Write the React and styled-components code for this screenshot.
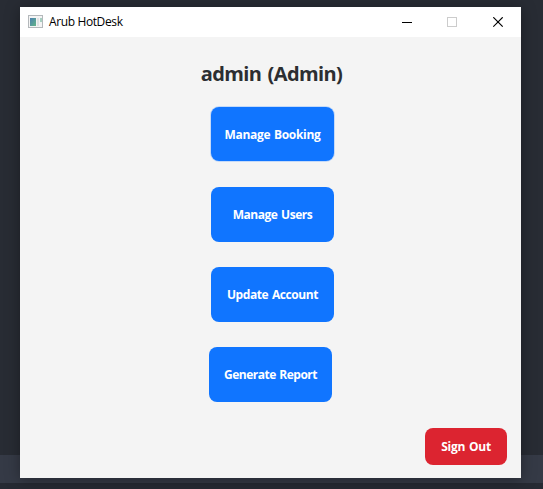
import React from 'react';
import styled, { createGlobalStyle } from 'styled-components';

const GlobalStyle = createGlobalStyle`
  * { box-sizing: border-box; }
  body { margin: 0; overflow: hidden; background: #282c34; font-family: "Open Sans", "Noto Sans", sans-serif; }
`;
const Desktop = styled.div`
  height: 489px;
  padding: 7px 22px 0 20px;
  background: linear-gradient(#282c34 0 455px, #353a46 455px 483px, #262a33 483px);
`;
const Window = styled.main`
  height: 471px;
  background: #f4f4f4;
  box-shadow: 0 2px 14px rgba(0, 0, 0, 0.35);
`;
const TitleBar = styled.header`
  display: flex;
  align-items: center;
  height: 30px;
  padding-left: 8px;
  background: #fff;
`;
const AppIcon = styled.svg`
  display: block;
  margin-top: -2px;
`;
const Title = styled.span`
  flex: 1;
  padding-left: 6px;
  font-size: 12px;
  line-height: 16px;
  letter-spacing: -0.38px;
  color: #000;
`;
const WindowControl = styled.span`
  width: 45.5px;
  height: 30px;
  display: grid;
  place-items: center;
`;
const Content = styled.section`
  display: flex;
  flex-direction: column;
  align-items: center;
  height: 441px;
  padding: 23px 14px 13px 14px;
`;
const Heading = styled.h1`
  margin: 0 0 19px;
  padding-left: 2px;
  font-size: 20px;
  line-height: 28px;
  font-weight: 700;
  letter-spacing: -0.6px;
  word-spacing: 1.5px;
  color: #2c2e31;
`;
const Menu = styled.nav`
  display: flex;
  flex-direction: column;
  align-items: flex-end;
  gap: 25px;
  padding-left: 2px;
`;
const Button = styled.button`
  width: ${(p) => p.$width}px;
  height: ${(p) => p.$height}px;
  padding: 0;
  border: 0;
  border-radius: 8px;
  background: ${(p) => p.$color};
  color: #fff;
  font: 700 12px/16px "Open Sans", "Noto Sans", sans-serif;
  letter-spacing: ${(p) => p.$tracking}px;
  word-spacing: 1px;
  margin-right: ${(p) => p.$shift || 0}px;
`;
const FocusedButton = styled(Button)`
  padding-top: 1px;
  margin-bottom: 1px;
  box-shadow: 0 0 0 1px #c5daf8;
`;
const SignOut = styled(Button)`
  align-self: flex-end;
  margin-top: auto;
`;

const blue = '#1075ff';

export default function App() {
  return (
    <>
      <GlobalStyle />
      <Desktop>
        <Window>
          <TitleBar>
            <AppIcon width="15" height="13">
              <defs>
                <linearGradient id="pane" x1="0" y1="0" x2="1" y2="1">
                  <stop offset="0" stopColor="#4c7fb0" />
                  <stop offset="1" stopColor="#62b588" />
                </linearGradient>
              </defs>
              <rect x=".5" y=".5" width="14" height="12" fill="#f4f4f4" stroke="#b4b8bb" />
              <rect x="2" y="3" width="6" height="8" fill="url(#pane)" />
              <rect x="9" y="3" width="2" height="8" fill="#dfe2e3" />
              <rect x="12" y="3" width="2" height="4" fill="#a5cfc0" />
            </AppIcon>
            <Title>Arub HotDesk</Title>
            <WindowControl><svg width="11" height="11"><path d="M0 5.5H10" stroke="#000" /></svg></WindowControl>
            <WindowControl><svg width="11" height="11"><rect x=".5" y=".5" width="9" height="9" fill="none" stroke="#ccc" /></svg></WindowControl>
            <WindowControl><svg width="11" height="11"><path d="M.3 .3L9.7 9.7M9.7 .3L.3 9.7" stroke="#000" strokeWidth="1.2" /></svg></WindowControl>
          </TitleBar>
          <Content>
            <Heading>admin (Admin)</Heading>
            <Menu>
              <FocusedButton $width={123} $height={54} $color={blue} $tracking={-0.32}>Manage Booking</FocusedButton>
              <Button $width={123} $height={55} $color={blue} $tracking={-0.47}>Manage Users</Button>
              <Button $width={123} $height={55} $color={blue} $tracking={-0.42}>Update Account</Button>
              <Button $width={123} $height={55} $color={blue} $tracking={-0.5} $shift={2}>Generate Report</Button>
            </Menu>
            <SignOut $width={82} $height={37} $color="#dc2430" $tracking={-0.25}>Sign Out</SignOut>
          </Content>
        </Window>
      </Desktop>
    </>
  );
}
